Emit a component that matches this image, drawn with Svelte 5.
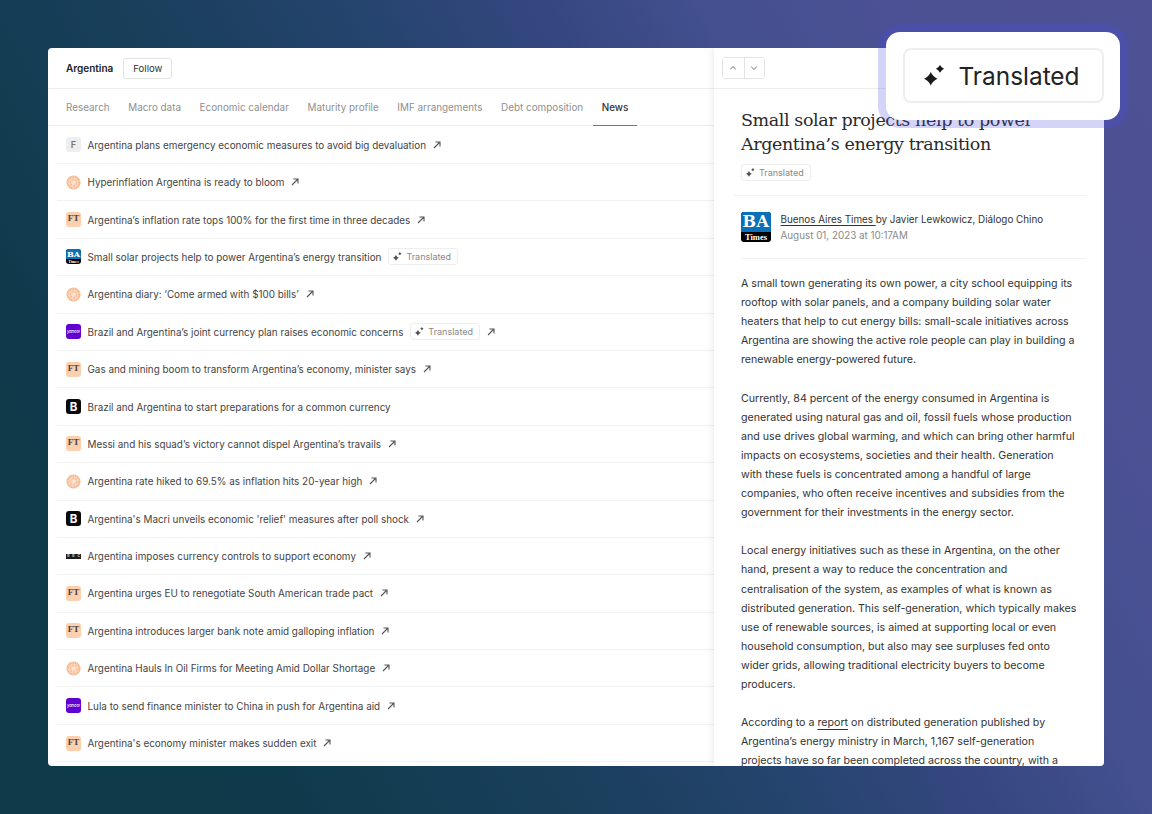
<script>
  const tabs = ['Research','Macro data','Economic calendar','Maturity profile','IMF arrangements','Debt composition','News'];
  const rows = [
    ['f','Argentina plans emergency economic measures to avoid big devaluation',0,1],
    ['sun','Hyperinflation Argentina is ready to bloom',0,1],
    ['ft','Argentina’s inflation rate tops 100% for the first time in three decades',0,1],
    ['ba','Small solar projects help to power Argentina’s energy transition',1,0],
    ['sun','Argentina diary: ‘Come armed with $100 bills’',0,1],
    ['yahoo','Brazil and Argentina’s joint currency plan raises economic concerns',1,1],
    ['ft','Gas and mining boom to transform Argentina’s economy, minister says',0,1],
    ['b','Brazil and Argentina to start preparations for a common currency',0,0],
    ['ft','Messi and his squad’s victory cannot dispel Argentina’s travails',0,1],
    ['sun','Argentina rate hiked to 69.5% as inflation hits 20-year high',0,1],
    ['b','Argentina\'s Macri unveils economic \'relief\' measures after poll shock',0,1],
    ['bbc','Argentina imposes currency controls to support economy',0,1],
    ['ft','Argentina urges EU to renegotiate South American trade pact',0,1],
    ['ft','Argentina introduces larger bank note amid galloping inflation',0,1],
    ['sun','Argentina Hauls In Oil Firms for Meeting Amid Dollar Shortage',0,1],
    ['yahoo','Lula to send finance minister to China in push for Argentina aid',0,1],
    ['ft','Argentina\'s economy minister makes sudden exit',0,1]
  ];
  const spark = 'M6.8 7 Q8.8 11.7 13.5 13.7 Q8.8 15.7 6.8 20.4 Q4.8 15.7 .1 13.7 Q4.8 11.7 6.8 7Z M16 0 Q17.3 2.5 20 3.8 Q17.3 5.1 16 7.8 Q14.7 5.1 12 3.8 Q14.7 2.5 16 0Z';
</script>

{#snippet sparkIcon(cls)}
  <svg class={cls} viewBox="0 0 21 21" aria-hidden="true"><path d={spark} fill="currentColor"/></svg>
{/snippet}

{#snippet tag()}
  <span class="tag">{@render sparkIcon('tag-spark')}<span>Translated</span></span>
{/snippet}

{#snippet logo(kind)}
  {#if kind === 'f'}
    <span class="logo l-f">F</span>
  {:else if kind === 'sun'}
    <svg class="logo" viewBox="0 0 16 16" aria-hidden="true">
      <circle cx="8" cy="8" r="7.5" fill="#fbdcc6"/>
      <circle cx="8" cy="8" r="6.3" fill="none" stroke="#f4b088" stroke-width="2.2" stroke-dasharray="1.2 .7"/>
      <circle cx="8" cy="8" r="3.5" fill="none" stroke="#f7c4a2" stroke-width="2" stroke-dasharray="2.5 1"/>
      <circle cx="8.4" cy="7.8" r="1.2" fill="#fff3ea"/>
    </svg>
  {:else if kind === 'ft'}
    <span class="logo l-ft">FT</span>
  {:else if kind === 'ba'}
    <span class="logo l-ba"><b>BA</b><i>Times</i></span>
  {:else if kind === 'yahoo'}
    <span class="logo l-y">yahoo!</span>
  {:else if kind === 'b'}
    <span class="logo l-b">B</span>
  {:else}
    <span class="logo l-bbc"><i>B</i><i>B</i><i>C</i></span>
  {/if}
{/snippet}

<div class="page">
  <div class="window">
    <section class="left">
      <header class="top">
        <strong>Argentina</strong>
        <button class="follow">Follow</button>
      </header>
      <nav class="tabs">
        {#each tabs as t}
          <span class="tab" class:active={t === 'News'}>{t}</span>
        {/each}
      </nav>
      <ul class="list">
        {#each rows as r}
          <li class="row">
            {@render logo(r[0])}
            <span class="headline">{r[1]}</span>
            {#if r[2]}{@render tag()}{/if}
            {#if r[3]}
              <svg class="arrow" viewBox="0 0 8 8" aria-hidden="true"><path d="M1 7 L7 1 M2.4 1 H7 V5.6" fill="none" stroke="currentColor" stroke-width="1.1"/></svg>
            {/if}
          </li>
        {/each}
      </ul>
    </section>
    <aside class="right">
      <header class="rtop">
        <div class="steppers">
          <button aria-label="Previous"><svg viewBox="0 0 8 8"><path d="M1.2 5.2 L4 2.6 L6.8 5.2" fill="none" stroke="currentColor"/></svg></button>
          <button aria-label="Next"><svg viewBox="0 0 8 8"><path d="M1.2 2.8 L4 5.4 L6.8 2.8" fill="none" stroke="currentColor"/></svg></button>
        </div>
      </header>
      <div class="article">
        <h1>Small solar projects help to power Argentina’s energy transition</h1>
        <div class="title-tag">{@render tag()}</div>
        <div class="byline">
          <span class="logo big l-ba"><b>BA</b><i>Times</i></span>
          <div>
            <div class="by"><u>Buenos Aires Times&nbsp;</u>by Javier Lewkowicz, Diálogo Chino</div>
            <div class="date">August 01, 2023 at 10:17AM</div>
          </div>
        </div>
        <div class="body">
          <p>A small town generating its own power, a city school equipping its rooftop with solar panels, and a company building solar water heaters that help to cut energy bills: small-scale initiatives across Argentina are showing the active role people can play in building a renewable energy-powered future.</p>
          <p>Currently, 84 percent of the energy consumed in Argentina is generated using natural gas and oil, fossil fuels whose production and use drives global warming, and which can bring other harmful impacts on ecosystems, societies and their health. Generation with these fuels is concentrated among a handful of large companies, who often receive incentives and subsidies from the government for their investments in the energy sector.</p>
          <p>Local energy initiatives such as these in Argentina, on the other hand, present a way to reduce the concentration and centralisation of the system, as examples of what is known as distributed generation. This self-generation, which typically makes use of renewable sources, is aimed at supporting local or even household consumption, but also may see surpluses fed onto wider grids, allowing traditional electricity buyers to become producers.</p>
          <p>According to a <u>report</u> on distributed generation published by Argentina’s energy ministry in March, 1,167 self-generation projects have so far been completed across the country, with a</p>
        </div>
      </div>
    </aside>
  </div>
  <div class="callout">
    <div class="callout-inner">
      {@render sparkIcon('big-spark')}
      <span>Translated</span>
    </div>
  </div>
</div>

<style>
  :global(body) { margin: 0; }
  .page {
    position: relative;
    width: 1152px;
    height: 814px;
    box-sizing: border-box;
    padding: 48px;
    overflow: hidden;
    font-family: Inter, "Liberation Sans", sans-serif;
    color: #333;
    background: linear-gradient(61deg, #0e3a4a 0%, #0f3a4b 18%, #1a3f5c 37%, #25446e 50%, #354780 62%, #445090 72%, #4c5194 85%, #4e5295 100%);
  }
  .window {
    display: flex;
    height: 718px;
    background: #fff;
    border-radius: 4px;
    overflow: hidden;
  }
  .left { width: 666px; flex: none; }
  .top {
    height: 40px;
    display: flex;
    align-items: center;
    gap: 10px;
    padding-left: 18px;
    border-bottom: 1px solid #eeeeee;
  }
  .top strong { font-size: 10px; font-weight: 600; color: #222; }
  .follow {
    font: 400 9.6px Inter, sans-serif;
    color: #333;
    width: 49px;
    height: 21px;
    padding: 0;
    background: #fff;
    border: 1px solid #e3e3e3;
    border-radius: 3px;
  }
  .tabs {
    height: 37px;
    box-sizing: border-box;
    display: flex;
    gap: 18.6px;
    padding-left: 18px;
    border-bottom: 1px solid #eeeeee;
    font-size: 9.9px;
    color: #8f8f8f;
  }
  .tab { display: flex; align-items: center; }
  .tab.active { color: #333; font-weight: 500; padding: 0 9px; margin-left: -9px; border-bottom: 1px solid #777; height: 37px; box-sizing: border-box; }
  .list { list-style: none; margin: 0; padding: .6px 0 0; }
  .row {
    height: 37.4px;
    box-sizing: border-box;
    margin-left: 9px;
    padding-left: 9px;
    display: flex;
    align-items: center;
    border-bottom: 1px solid #f1f1f1;
    font-size: 9.88px;
    color: #444;
  }
  .headline { margin-left: 6.5px; white-space: nowrap; }
  .arrow { width: 8px; height: 8px; margin-left: 7px; color: #555; }
  .logo {
    width: 15px;
    height: 15px;
    flex: none;
    border-radius: 3px;
    display: inline-flex;
    align-items: center;
    justify-content: center;
    overflow: hidden;
  }
  .l-f { background: #eeeeee; color: #777; font-size: 9px; font-weight: 600; }
  .l-ft { background: #fcd0ae; color: #4d3f38; font: 700 9px "Liberation Serif", serif; align-items: flex-start; padding-top: 1px; box-sizing: border-box; }
  .l-ba { flex-direction: column; background: #000; }
  .l-ba b { flex: 1 1 64%; width: 100%; background: #0a70b8; color: #fff; font: 700 8px/10px "DejaVu Serif", serif; text-align: center; }
  .l-ba i { flex: 1 1 36%; color: #fff; font: 700 4px/5px "Liberation Serif", serif; }
  .l-ba.big { width: 30px; height: 30px; flex: none; }
  .l-ba.big b { font-size: 16px; line-height: 20px; letter-spacing: .5px; }
  .l-ba.big i { font-size: 8.5px; line-height: 10px; }
  .l-y { background: #6001d2; color: #fff; font-size: 4px; font-weight: 500; font-style: italic; }
  .l-b { background: #0a0a0a; color: #fff; font-size: 11.5px; font-weight: 700; }
  .l-bbc { gap: .6px; border-radius: 0; }
  .l-bbc i { display: flex; align-items: center; justify-content: center; width: 4.6px; height: 5px; background: #1c1c1c; color: #ccc; font: 700 3.5px/5px Inter, sans-serif; }
  .tag {
    display: inline-flex;
    align-items: center;
    gap: 4px;
    height: 15px;
    margin-left: 7px;
    padding: 0 6px 0 4px;
    border: 1px solid #eeeeee;
    border-radius: 3px;
    font-size: 9px;
    color: #888;
    white-space: nowrap;
  }
  :global(.tag-spark) { width: 9px; height: 9px; color: #555; }
  .right {
    flex: 1;
    position: relative;
    box-shadow: -3px 0 6px rgba(0,0,0,.06);
    min-width: 0;
  }
  .rtop {
    height: 40px;
    display: flex;
    align-items: center;
    padding-left: 8px;
    border-bottom: 1px solid #eeeeee;
  }
  .steppers { display: flex; border: 1px solid #e3e3e3; border-radius: 3px; }
  .steppers button {
    width: 20.5px; height: 20px; padding: 0; background: #fff; border: 0; color: #777;
    display: flex; align-items: center; justify-content: center;
  }
  .steppers button + button { border-left: 1px solid #e3e3e3; }
  .steppers svg { width: 8px; height: 8px; }
  .article { padding: 19px 18px 0 27px; }
  h1 {
    margin: 0;
    font: 400 17.5px/24px "DejaVu Serif", serif;
    color: #2a2a2a;
    letter-spacing: -.4px;
  }
  .title-tag { margin: 8px 0 0 -7px; padding-bottom: 14px; border-bottom: 1px solid #f1f1f1; display: flex; }
  .byline {
    display: flex;
    align-items: center;
    gap: 9.5px;
    height: 62px;
    border-bottom: 1px solid #f1f1f1;
  }
  .by { font-size: 9.85px; line-height: 16px; color: #333; }
  .by u { text-underline-offset: 2px; }
  .date { font-size: 9.85px; line-height: 16px; color: #8a8a8a; }
  .body { padding-top: 15px; padding-right: 9px; font-size: 10.67px; line-height: 19.1px; color: #333; }
  .body p { margin: 0 0 19.1px; }
  .body u { text-underline-offset: 2.5px; }
  .callout {
    position: absolute;
    left: 886px;
    top: 32px;
    width: 234px;
    height: 88px;
    box-sizing: border-box;
    padding: 16px 16px 17px 17px;
    background: #fff;
    border-radius: 14px;
    box-shadow: 0 0 0 8px rgba(76, 74, 230, .24);
  }
  .callout-inner {
    height: 100%;
    box-sizing: border-box;
    display: flex;
    align-items: center;
    gap: 13.5px;
    padding-left: 19px;
    border: 2px solid #eeeeee;
    border-radius: 8px;
    font-size: 24.4px;
    color: #222;
  }
  :global(.big-spark) { width: 21px; height: 21px; color: #1a1a1a; }
</style>
